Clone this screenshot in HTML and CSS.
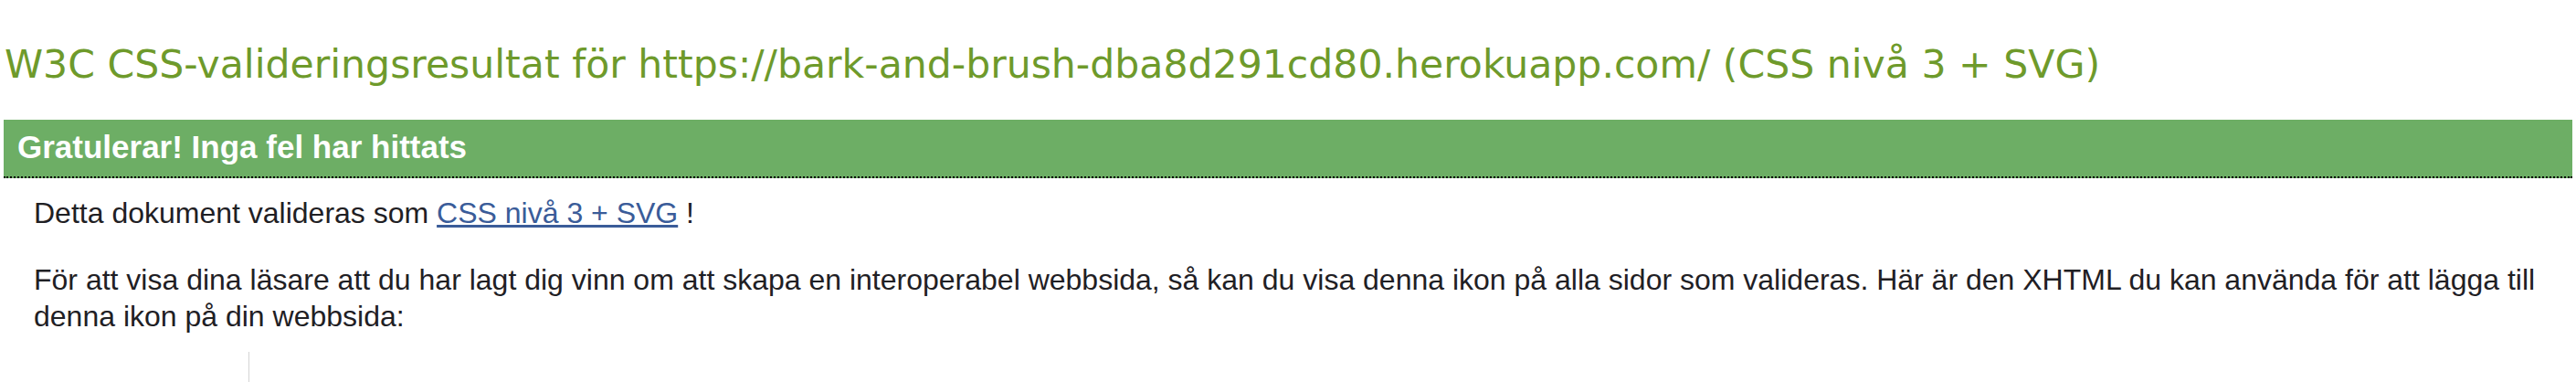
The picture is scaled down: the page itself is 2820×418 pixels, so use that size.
FILE: index.html
```html
<!DOCTYPE html>
<html lang="sv">
<head>
<meta charset="utf-8">
<title>W3C CSS-valideringsresultat</title>
<link rel="stylesheet" href="styles.css">
</head>
<body>
<div class="page">
  <h1 class="title">W3C CSS-valideringsresultat för https://bark-and-brush-dba8d291cd80.herokuapp.com/ (CSS nivå 3 + SVG)</h1>
  <h2 class="congrats">Gratulerar! Inga fel har hittats</h2>
  <div class="content">
    <p class="first">Detta dokument valideras som <a href="#" class="link">CSS nivå 3 + SVG</a> !</p>
    <p class="second">För att visa dina läsare att du har lagt dig vinn om att skapa en interoperabel webbsida, så kan du visa denna ikon på alla sidor som valideras. Här är den XHTML du kan använda för att lägga till denna ikon på din webbsida:</p>
    <div class="badges"></div>
  </div>
</div>
</body>
</html>
```
FILE: styles.css
```css
html, body {
  margin: 0;
  padding: 0;
  background: #ffffff;
}

.page {
  padding: 0 4px;
  font-family: "Liberation Sans", Arial, sans-serif;
  color: #1f2024;
}

.title {
  margin: 0;
  padding: 46px 0 0 1px;
  font-family: "DejaVu Sans", Verdana, sans-serif;
  font-weight: normal;
  font-size: 42.6px;
  line-height: 49px;
  color: #6e9a2b;
  white-space: nowrap;
}

.congrats {
  margin: 36px 0 0 0;
  padding: 10px 15px 12px 15px;
  background: #6dae65;
  border-bottom: 2px dotted #000000;
  color: #ffffff;
  font-family: "Liberation Sans", Arial, sans-serif;
  font-weight: bold;
  font-size: 35px;
  line-height: 40px;
}

.content {
  padding: 0 0 0 33px;
  font-size: 32px;
  line-height: 40px;
}

.content p {
  margin: 0;
}

.first {
  padding-top: 18px;
}

.second {
  padding-top: 33px;
}

.link {
  color: #3a5c99;
  text-decoration: underline;
}

.badges {
  margin: 19px 0 0 235px;
  height: 80px;
  border-left: 1px solid #d4d4d4;
}
```
